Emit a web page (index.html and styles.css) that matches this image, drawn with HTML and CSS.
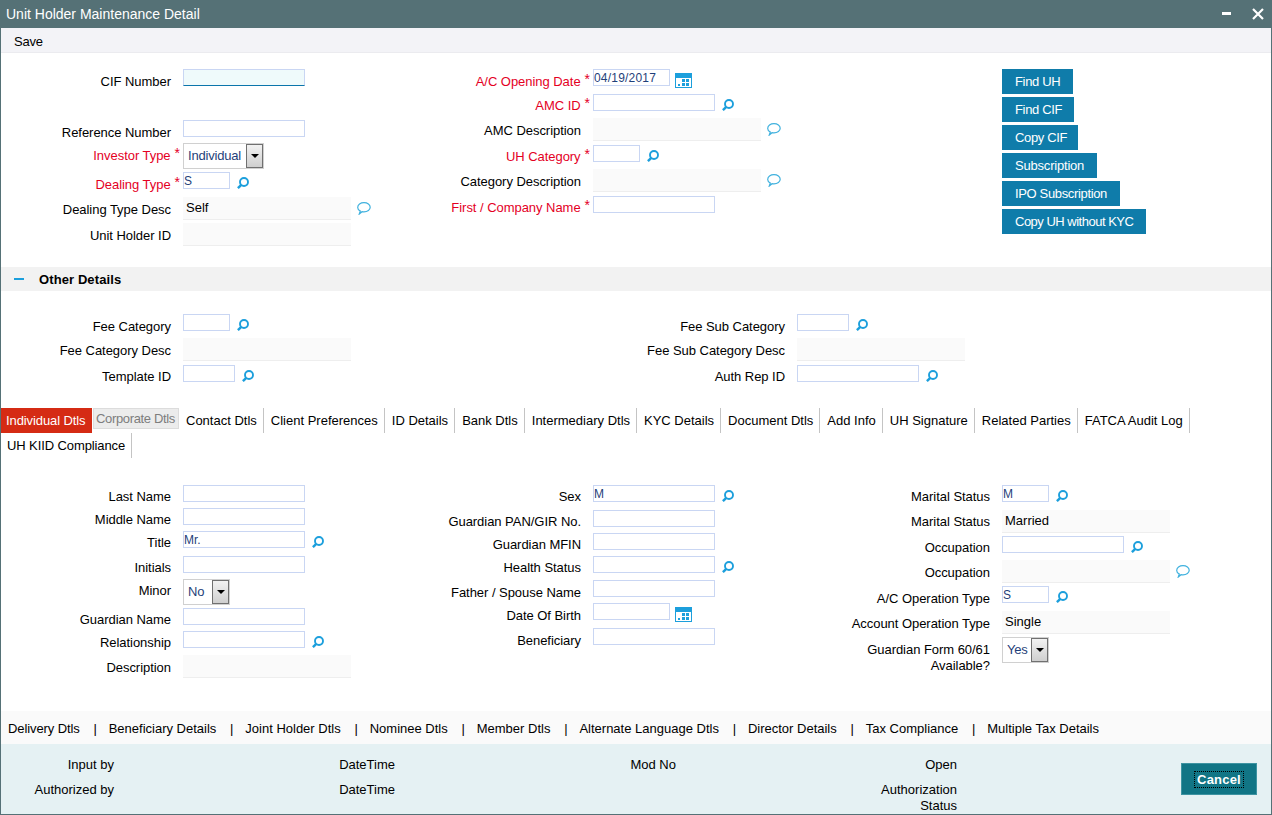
FILE: index.html
```
<!DOCTYPE html>
<html lang="en">
<head>
    <meta charset="UTF-8">
    <title>Unit Holder Maintenance Detail</title>
    <link rel="stylesheet" href="styles.css">
</head>
<body>
    <!-- shared icons -->
    <svg class="sprite" width="0" height="0">
        <symbol id="search" viewBox="0 0 12 12">
            <circle cx="7" cy="5" r="4" fill="none" stroke="#1c9fdc" stroke-width="1.900"/>
            <path d="M4.300 7.800L0.900 11.200" stroke="#1c9fdc" stroke-width="2.400"/>
        </symbol>
        <symbol id="bubble" viewBox="0 0 14 13">
            <path d="M3.300 9C1.400 8 0.700 6.700 0.700 5.400C0.700 2.800 3.500 0.700 7 0.700S13.200 2.800 13.200 5.300S10.500 9.900 7 9.900C6.300 9.900 5.600 9.800 5 9.700L2.300 12Z" fill="none" stroke="#3fb1de" stroke-width="1.200"/>
        </symbol>
        <symbol id="calendar" viewBox="0 0 17 15">
            <path d="M0 0H17V15H0ZM1 5V14H16V5Z" fill="#1c9fdc" fill-rule="evenodd"/>
            <path d="M7 6h3v3H7zM11 6h3v3H11zM3 11h2v2H3zM7 10h3v3H7zM11 10h3v3H11z" fill="#1c9fdc"/>
        </symbol>
    </svg>

    <div class="window">
        <header class="titlebar">
            <h1>Unit Holder Maintenance Detail</h1>
            <svg class="win-icons" width="42" height="14" viewBox="0 0 42 14">
                <path d="M0 6.500H9" stroke="#fff" stroke-width="3"/>
                <path d="M31 2L41 12M41 2L31 12" stroke="#fff" stroke-width="2.200"/>
            </svg>
        </header>
        <div class="toolbar">Save</div>

        <!-- main details -->
        <section class="panel main-panel">
            <div class="col col-1">
                <div class="row h51"><label>CIF Number</label><input class="focused"></div>
                <div class="row h23"><label>Reference Number</label><input></div>
                <div class="row h29 required"><label>Investor Type</label><div class="select w81">Individual<span class="arrow"></span></div></div>
                <div class="row h25 required"><label>Dealing Type</label><input class="w47" value="S"><svg class="search"><use href="#search"/></svg></div>
                <div class="row h26"><label>Dealing Type Desc</label><div class="readonly">Self</div><svg class="bubble"><use href="#bubble"/></svg></div>
                <div class="row h25"><label>Unit Holder ID</label><div class="readonly"></div></div>
            </div>
            <div class="col col-2">
                <div class="row h25 required"><label>A/C Opening Date</label><input class="w77 date" value="04/19/2017"><svg class="calendar"><use href="#calendar"/></svg></div>
                <div class="row h24 required up"><label>AMC ID</label><input><svg class="search"><use href="#search"/></svg></div>
                <div class="row h27"><label>AMC Description</label><div class="readonly"></div><svg class="bubble"><use href="#bubble"/></svg></div>
                <div class="row h24 required up"><label>UH Category</label><input class="w47"><svg class="search"><use href="#search"/></svg></div>
                <div class="row h27"><label>Category Description</label><div class="readonly"></div><svg class="bubble"><use href="#bubble"/></svg></div>
                <div class="row h25 required up"><label>First / Company Name</label><input></div>
            </div>
            <div class="actions">
                <button class="w71">Find UH</button>
                <button class="w72">Find CIF</button>
                <button class="w76">Copy CIF</button>
                <button class="w95">Subscription</button>
                <button class="w118">IPO Subscription</button>
                <button class="w144">Copy UH without KYC</button>
            </div>
        </section>

        <!-- other details -->
        <h2 class="section-title"><span class="collapse"></span>Other Details</h2>
        <section class="panel other-panel">
            <div class="col col-1">
                <div class="row h24"><label>Fee Category</label><input class="w47"><svg class="search"><use href="#search"/></svg></div>
                <div class="row h27"><label>Fee Category Desc</label><div class="readonly"></div></div>
                <div class="row h24 up"><label>Template ID</label><input class="w52"><svg class="search"><use href="#search"/></svg></div>
            </div>
            <div class="col col-wide">
                <div class="row h24"><label>Fee Sub Category</label><input class="w52"><svg class="search"><use href="#search"/></svg></div>
                <div class="row h27"><label>Fee Sub Category Desc</label><div class="readonly"></div></div>
                <div class="row h24 up"><label>Auth Rep ID</label><input><svg class="search"><use href="#search"/></svg></div>
            </div>
        </section>

        <!-- tabs -->
        <nav class="tabs">
            <a class="active">Individual Dtls</a>
            <a class="disabled">Corporate Dtls</a>
            <a>Contact Dtls</a>
            <a>Client Preferences</a>
            <a>ID Details</a>
            <a>Bank Dtls</a>
            <a>Intermediary Dtls</a>
            <a>KYC Details</a>
            <a>Document Dtls</a>
            <a>Add Info</a>
            <a>UH Signature</a>
            <a>Related Parties</a>
            <a>FATCA Audit Log</a>
            <a class="second-line">UH KIID Compliance</a>
        </nav>

        <section class="panel tab-panel">
            <div class="col col-1">
                <div class="row h23 up"><label>Last Name</label><input></div>
                <div class="row h23 up"><label>Middle Name</label><input></div>
                <div class="row h25 up"><label>Title</label><input value="Mr."><svg class="search"><use href="#search"/></svg></div>
                <div class="row h23 up"><label>Initials</label><input></div>
                <div class="row h29 up"><label>Minor</label><div class="select w47">No<span class="arrow"></span></div></div>
                <div class="row h23 up"><label>Guardian Name</label><input></div>
                <div class="row h24 up"><label>Relationship</label><input><svg class="search"><use href="#search"/></svg></div>
                <div class="row h25"><label>Description</label><div class="readonly"></div></div>
            </div>
            <div class="col col-2">
                <div class="row h25 up"><label>Sex</label><input value="M"><svg class="search"><use href="#search"/></svg></div>
                <div class="row h23 up"><label>Guardian PAN/GIR No.</label><input></div>
                <div class="row h23 up"><label>Guardian MFIN</label><input></div>
                <div class="row h24 up"><label>Health Status</label><input><svg class="search"><use href="#search"/></svg></div>
                <div class="row h23"><label>Father / Spouse Name</label><input></div>
                <div class="row h25"><label>Date Of Birth</label><input class="w77"><svg class="calendar"><use href="#calendar"/></svg></div>
                <div class="row h25"><label>Beneficiary</label><input></div>
            </div>
            <div class="col col-3">
                <div class="row h25 up"><label>Marital Status</label><input class="w47" value="M"><svg class="search"><use href="#search"/></svg></div>
                <div class="row h26 up"><label>Marital Status</label><div class="readonly">Married</div></div>
                <div class="row h24 up"><label>Occupation</label><input><svg class="search"><use href="#search"/></svg></div>
                <div class="row h26"><label>Occupation</label><div class="readonly"></div><svg class="bubble"><use href="#bubble"/></svg></div>
                <div class="row h25"><label>A/C Operation Type</label><input class="w47" value="S"><svg class="search"><use href="#search"/></svg></div>
                <div class="row h26"><label>Account Operation Type</label><div class="readonly">Single</div></div>
                <div class="row h29"><label>Guardian Form 60/61<br>Available?</label><div class="select w47">Yes<span class="arrow"></span></div></div>
            </div>
        </section>

        <nav class="links">
            <a class="first">Delivery Dtls</a><span>|</span>
            <a>Beneficiary Details</a><span>|</span>
            <a>Joint Holder Dtls</a><span>|</span>
            <a>Nominee Dtls</a><span>|</span>
            <a>Member Dtls</a><span>|</span>
            <a>Alternate Language Dtls</a><span>|</span>
            <a>Director Details</a><span>|</span>
            <a>Tax Compliance</a><span>|</span>
            <a>Multiple Tax Details</a>
        </nav>

        <footer class="footer">
            <div class="audit">
                <span>Input by</span><span>DateTime</span><span>Mod No</span><span>Open</span>
                <span>Authorized by</span><span>DateTime</span><span></span><span>Authorization<br>Status</span>
            </div>
            <button class="cancel"><span>Cancel</span></button>
        </footer>
    </div>
</body>
</html>
```
FILE: styles.css
```
* {
    box-sizing: border-box;
}
body {
    margin: 0;
    font-family: "Liberation Sans", Arial, sans-serif;
    font-size: 13px;
    line-height: 16px;
    color: #000;
    background: #fff;
}
.sprite {
    position: absolute;
}
.window {
    display: flex;
    flex-direction: column;
    height: 815px;
    border: 1px solid #557176;
    border-top: none;
    overflow: hidden;
}
.window > * {
    flex-shrink: 0;
}

/* title bar */
.titlebar {
    display: flex;
    align-items: center;
    justify-content: space-between;
    height: 28px;
    padding: 0 7px 0 5px;
    background: #557176;
    color: #fff;
}
.titlebar h1 {
    margin: 0;
    font-size: 14px;
    font-weight: normal;
}
.toolbar {
    height: 25px;
    padding: 6px 13px;
    background: #f3f3f7;
    border-bottom: 1px solid #ebebef;
    letter-spacing: -0.2px;
}

/* form layout */
.panel {
    display: flex;
}
.main-panel {
    height: 214px;
    padding-top: 16px;
}
.other-panel {
    height: 117px;
    padding-top: 23px;
}
.tab-panel {
    height: 253px;
    padding-top: 27px;
}
.col-1 {
    width: 410px;
}
.col-2 {
    width: 409px;
}
.col-wide {
    margin-left: 204px;
}
.actions {
    display: flex;
    flex-direction: column;
    align-items: flex-start;
    gap: 3px;
    padding-left: 182px;
}
.row {
    display: flex;
    align-items: flex-start;
}
.row label {
    width: 170px;
    margin-right: 12px;
    padding-top: 5px;
    text-align: right;
    white-space: nowrap;
    letter-spacing: -0.04px;
}
.row.up label {
    padding-top: 4px;
}
.required label {
    width: 179px;
    margin-right: 3px;
    color: #e4001f;
}
.required label::after {
    content: "*";
    margin-left: 4px;
    font-size: 14px;
    line-height: 0;
    vertical-align: 2px;
}
.h23 { height: 23px; }
.h24 { height: 24px; }
.h25 { height: 25px; }
.h26 { height: 26px; }
.h27 { height: 27px; }
.h29 { height: 29px; }
.h51 { height: 51px; }

/* fields */
input {
    width: 122px;
    height: 17px;
    padding: 0;
    border: 1px solid #c9d6f3;
    background: #fff;
    color: #1f3f7a;
    font-family: inherit;
    font-size: 12px;
    outline: none;
}
input.date {
    letter-spacing: 0.2px;
}
input.focused {
    background: #effafb;
    border-bottom-color: #0b75ab;
}
.readonly {
    width: 168px;
    height: 23px;
    padding: 3px;
    background: #fafafa;
    border-bottom: 1px solid #eee;
}
.select {
    display: flex;
    align-items: center;
    justify-content: space-between;
    height: 26px;
    padding-left: 4px;
    border: 1px solid #d0d0d0;
    color: #1f3f7a;
    letter-spacing: -0.2px;
}
.arrow {
    display: flex;
    align-items: center;
    justify-content: center;
    width: 17px;
    height: 24px;
    border: 1px solid #707070;
    background: linear-gradient(#f2f2f2, #cfcfcf);
}
.arrow::after {
    content: "";
    border: 4px solid transparent;
    border-top-color: #000;
    border-bottom: none;
}
.w47 { width: 47px; }
.w52 { width: 52px; }
.w71 { width: 71px; }
.w72 { width: 72px; }
.w76 { width: 76px; }
.w77 { width: 77px; }
.w81 { width: 81px; }
.w95 { width: 95px; }
.w118 { width: 118px; }
.w144 { width: 144px; }
.search {
    width: 12px;
    height: 12px;
    margin: 5px 0 0 7px;
}
.bubble {
    width: 14px;
    height: 13px;
    margin: 5px 0 0 6px;
}
.calendar {
    width: 17px;
    height: 15px;
    margin: 4px 0 0 5px;
}
button {
    height: 25px;
    padding: 0;
    border: none;
    background: #0f7caa;
    color: #fff;
    font-family: inherit;
    font-size: 13px;
}
.actions button {
    padding-left: 13px;
    text-align: left;
    white-space: nowrap;
    letter-spacing: -0.35px;
}
.actions .w95 {
    letter-spacing: -0.2px;
}
.actions .w144 {
    letter-spacing: -0.5px;
}

/* section bar */
.section-title {
    display: flex;
    align-items: center;
    height: 24px;
    margin: 0;
    padding: 1px 0 0 13px;
    background: #f2f2f2;
    font-size: 13px;
    letter-spacing: 0.1px;
}
.collapse {
    width: 10px;
    height: 2px;
    margin: 0 15px 2px 0;
    background: #1c9fdc;
}

/* tabs */
.tabs {
    display: flex;
    flex-wrap: wrap;
    align-content: flex-start;
    height: 50px;
    padding-right: 60px;
}
.tabs a {
    height: 25px;
    padding: 5px 6px 4px 7px;
    border-right: 1px solid #c4c4c4;
    white-space: nowrap;
}
.tabs .active {
    width: 91px;
    padding: 5px 0 0 5px;
    background: #d52b14;
    color: #fff;
    border: none;
    letter-spacing: -0.1px;
}
.tabs .disabled {
    width: 86px;
    height: 21px;
    margin-left: 1px;
    padding: 2px 0 0 2px;
    border: 1px solid #dcdcdc;
    background: #ececec;
    color: #7d7d7d;
    letter-spacing: -0.35px;
}
.tabs .second-line {
    padding-left: 6px;
    letter-spacing: -0.1px;
}

/* bottom */
.links {
    display: flex;
    height: 33px;
    padding: 10px 7px;
    background: #fafafa;
}
.links .first {
    letter-spacing: -0.1px;
}
.links span {
    width: 29px;
    padding-left: 2px;
    text-align: center;
}
.footer {
    display: flex;
    justify-content: space-between;
    height: 70px;
    padding-right: 14px;
    background: #e5f1f3;
}
.audit {
    display: grid;
    grid-template-columns: 113px 281px 281px 281px;
    grid-template-rows: 25px 32px;
    padding-top: 13px;
    text-align: right;
}
.cancel {
    width: 76px;
    height: 32px;
    margin-top: 19px;
    background: #117585;
    border: 1px solid #3d93a1;
    font-weight: bold;
}
.cancel span {
    padding: 0 2px;
    outline: 1px dotted #000;
    letter-spacing: 0.2px;
}
```
